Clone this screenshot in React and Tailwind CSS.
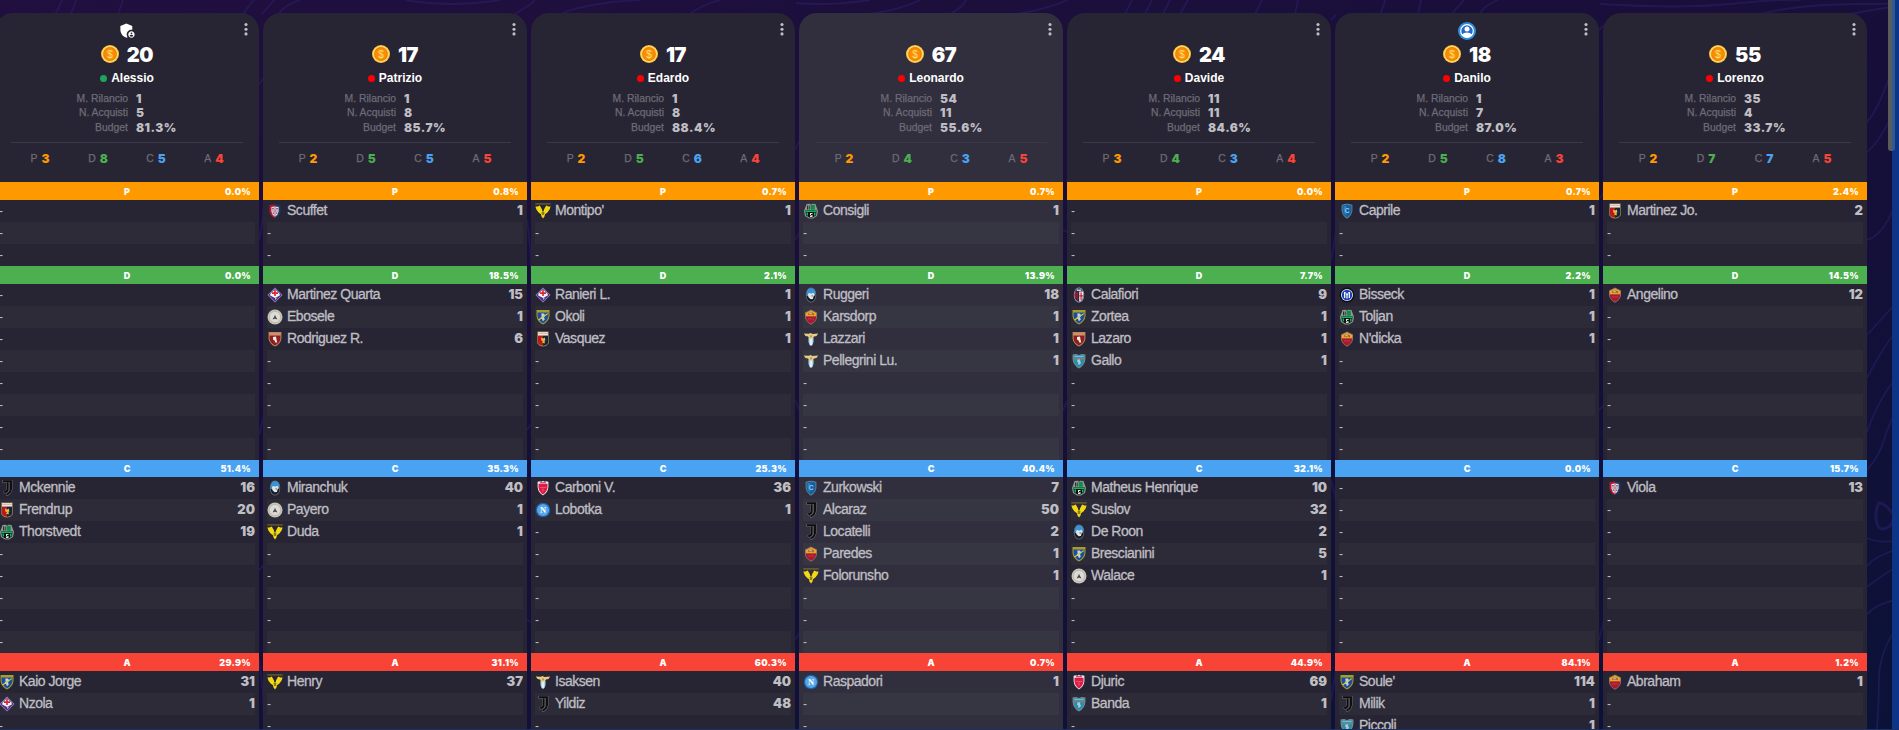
import React from "react";
import { MdAdminPanelSettings } from "react-icons/md";

const CRESTS = {
  cagliari: (
    <g>
      <path d="M2.400 2.300Q8 .6 13.600 2.300V8Q13 12.800 8 15.300Q3 12.800 2.400 8Z" fill="#1d3766" />
      <path d="M2.400 2.300Q5.200 1.400 8 1.400V15.300Q3 12.800 2.400 8Z" fill="#b3152e" />
      <path d="M4.400 4Q8 3 11.600 4V8.500Q11 12 8 13.800Q5 12 4.400 8.500Z" fill="#e6e2e8" />
      <path d="M7.400 4H8.600V13H7.400ZM4.500 7.400H11.500V8.500H4.500Z" fill="#cf6f80" />
      <path d="M5.200 5H6.700V6.400H5.200ZM9.300 5H10.800V6.400H9.300ZM5.700 9.500H7V10.800H5.700ZM9 9.500H10.300V10.800H9Z" fill="#50546c" />
    </g>
  ),
  fiorentina: (
    <g>
      <path d="M8 .5L15.500 8L8 15.500L.5 8Z" fill="#9a86c0" />
      <path d="M8 1.500L14.500 8L8 14.500L1.500 8Z" fill="#4d2d86" />
      <path d="M8 2.200L12.600 6.800L12.800 8.500L8 11L3.200 8.500L3.400 6.800Z" fill="#f4f1f6" />
      <path d="M8 11.500L10.500 10.300L8 13Z" fill="#e8e2f0" />
      <path d="M7.200 3H8.800V9H7.200ZM5 5.300H11V6.900H5Z" fill="#d8262c" />
    </g>
  ),
  udinese: (
    <g>
      <circle cx="8" cy="8" r="7.500" fill="#c9c4b8" />
      <circle cx="8" cy="8" r="5.600" fill="#dddbd7" stroke="#b0aca2" strokeWidth=".6" />
      <path d="M8 5.800L8.800 7.800L10.400 10.200H9.200L8 9.400L6.800 10.200H5.600L7.200 7.800Z" fill="#45433f" />
    </g>
  ),
  torino: (
    <g>
      <path d="M1.600 1H14.400V8Q13.500 13 8 15.600Q2.500 13 1.600 8Z" fill="#b98a62" />
      <path d="M2.600 4.500H13.400V8Q12.600 12.400 8 14.500Q3.400 12.400 2.600 8Z" fill="#8e1f1d" />
      <path d="M2.600 2H13.400V4.200H2.600Z" fill="#d98a6c" />
      <path d="M6 6L9 5.400L9.600 9L10.300 11.500H8.300L7.600 9.500L6 8.600Z" fill="#f4eeec" />
    </g>
  ),
  verona: (
    <g>
      <path d="M.3 .6H15.700V1.300H.3Z" fill="#a8952a" />
      <path d="M.4 3.600H2.600L4.800 2.600L7 6.400L7.400 8.500H8.600L9 6.400L11.200 2.600L13.400 3.600H15.600L14.600 6.400L12.400 9.400L10 11.200L9.500 13.600L8 15.500L6.500 13.600L6 11.200L3.600 9.400L1.400 6.400Z" fill="#f3d913" />
      <path d="M6.500 8.900H9.500L9 12H7Z" fill="#8c7f18" />
    </g>
  ),
  frosinone: (
    <g>
      <path d="M1.500 1H14.500V7Q13.800 12.600 8 15.500Q2.200 12.600 1.500 7Z" fill="#a89c2d" />
      <path d="M2.500 3.500H13.500V7Q12.800 11.800 8 14.300Q3.200 11.800 2.500 7Z" fill="#1a4f9e" />
      <path d="M6.300 4.400L9 4.500L10.200 6.500L9 8.500L9.800 10.500L8 12.300L7 10L5.200 9.500L6.600 7.500Z" fill="#c3d2e6" />
      <path d="M3.200 10.500L12.800 4V5.200L3.900 11.500Z" fill="#d8c932" />
    </g>
  ),
  genoa: (
    <g>
      <path d="M2.300 .6H13.700V12.500Q12 15.200 8 15.500Q4 15.200 2.300 12.500Z" fill="#a08a4c" />
      <path d="M3 4.600H8V14.700Q4.400 14.400 3 12.200Z" fill="#bd1622" />
      <path d="M8 4.600H13V12.200Q11.600 14.400 8 14.700Z" fill="#122445" />
      <path d="M3 1.200H13V4.400H3Z" fill="#f2efee" />
      <path d="M3 2.300H13V3.100H3Z" fill="#e09c98" />
      <path d="M6 6.500L8 7.500L10 6.500V8.300L10.600 9L9.500 10L10 12.300L7 12L8 10.300L6.300 9.500Z" fill="#e5bd25" />
    </g>
  ),
  atalanta: (
    <g>
      <ellipse cx="8" cy="8" rx="5.200" ry="7.500" fill="#69727b" />
      <ellipse cx="8" cy="8" rx="4.500" ry="6.800" fill="#15191f" />
      <path d="M3.400 9Q3.200 1.200 8 1.100Q12.800 1.200 12.600 7L8 9Z" fill="#3d92d2" />
      <path d="M5 7Q6.500 5 8 6.800L10.500 5.800L12 8L10.500 9.500L10 12L7.500 12.300L5.300 10Z" fill="#dce5eb" />
      <path d="M8 8.500L10.500 7.800L9.300 10.500Z" fill="#8d979f" />
    </g>
  ),
  monza: (
    <g>
      <path d="M2.600 1.800L5 1.200L6.500 1.800L8 .7L9.500 1.800L11 1.200L13.400 1.800V7Q13 12.500 8 15.500Q3 12.500 2.600 7Z" fill="#eee9ee" />
      <path d="M3.500 3.800H12.500V7.400Q11.800 12 8 14.400Q4.200 12 3.500 7.400Z" fill="#dd1b45" />
      <path d="M4.800 6.900H11.200V7.500H4.800ZM7.700 8.500H8.300V11.500H7.700Z" fill="#f08da2" />
      <path d="M5 2.200H11V3.200H5Z" fill="#d62a50" />
    </g>
  ),
  napoli: (
    <g>
      <circle cx="8" cy="8" r="7.300" fill="#1d5fae" />
      <circle cx="8" cy="8" r="6" fill="#58a6e6" />
      <text x="8" y="11" textAnchor="middle" fontFamily="Liberation Serif, serif" fontWeight="700" fontSize="8.500" fill="#fff">N</text>
    </g>
  ),
  sassuolo: (
    <g>
      <path d="M3.500 1L7 .8L8 2L9 .8L12.500 1L13.500 4L15 8L14 13L10 15.500H6L2 13L1 8L2.500 4Z" fill="#8f9893" />
      <path d="M2.300 7.300H13.700L13 12.500L9.600 14.600H6.400L3 12.500Z" fill="#0b1411" />
      <path d="M8 1.800L11.800 2V6.700H8Z" fill="#0b8d49" />
      <path d="M4 2.500H5.300V6.500H4ZM6.300 2.500H7.200V6.500H6.300Z" fill="#28332e" />
      <path d="M2.500 7.500H13.500V9H2.500ZM3.500 9.500H5V12.500H3.500ZM11 9.500H12.500V12.500H11Z" fill="#15b465" />
      <path d="M7 10H9.500V11H8V12H9.500V14H7V13H8.500V12.500H7Z" fill="#e0e8e3" />
    </g>
  ),
  roma: (
    <g>
      <path d="M2 3.600L8 .5L14 3.600V8.500Q13 13 8 15.700Q3 13 2 8.500Z" fill="#8d7466" />
      <path d="M2.800 7.200H13.200V8.400Q12.300 12.500 8 14.800Q3.700 12.500 2.800 8.400Z" fill="#a91a31" />
      <path d="M2.800 4.100L8 1.400L13.200 4.100V7.200H2.800Z" fill="#f0a127" />
      <path d="M5 4.600L6.500 3.800H9.800L11 5V6.200H10V5.600H6.200L5.600 6.200Z" fill="#7a6544" />
      <path d="M6.300 4.200H8.800V5H6.300Z" fill="#ddd2bd" />
      <path d="M5 9.600H11V10.300H5Z" fill="#cf4250" />
    </g>
  ),
  lazio: (
    <g>
      <path d="M5.500 6.500H10.500V11Q10 14 8 15Q6 14 5.500 11Z" fill="#a9d7ee" />
      <path d="M7.200 7H8.800V14H7.200Z" fill="#edf5f9" />
      <path d="M.8 2.600L6 2.800L7.200 2L8.500 2.400L9.500 2.900L15.200 2.600L13.500 5L11 5.600L9.300 7.800H6.700L5 5.600L2.500 5Z" fill="#e6cc85" />
      <path d="M7 4.400H9L8.400 6.600H7.600Z" fill="#a58645" />
    </g>
  ),
  empoli: (
    <g>
      <path d="M2.600 2Q8 -.3 13.400 2V8Q12.600 13 8 15.700Q3.400 13 2.600 8Z" fill="#5d819c" />
      <path d="M3.500 2.700Q8 .8 12.500 2.700V8Q11.800 12.200 8 14.600Q4.200 12.200 3.500 8Z" fill="#155f9f" />
      <path d="M4.600 3.500Q6 2.800 7.300 2.700V12.500Q5 10.800 4.600 8Z" fill="#2a80c1" />
      <text x="8" y="10.300" textAnchor="middle" fontFamily="Liberation Sans, sans-serif" fontWeight="700" fontSize="6.500" fill="#9cc8e2">C</text>
    </g>
  ),
  juventus: (
    <g fill="none">
      <path d="M3.500 1.300H12V9Q11.500 13 7.200 14.900" stroke="#77767c" strokeWidth="2.800" />
      <path d="M4 1.300H12V9Q11.500 13 7.500 14.700" stroke="#0b0b0d" strokeWidth="1.900" />
      <path d="M8.700 3V9.500Q8.400 11.500 4.800 12.600" stroke="#77767c" strokeWidth="2.400" />
      <path d="M8.700 2.500V9.500Q8.400 11.500 5.200 12.400" stroke="#0b0b0d" strokeWidth="1.700" />
    </g>
  ),
  bologna: (
    <g>
      <ellipse cx="8" cy="8" rx="5.200" ry="7.500" fill="#aeb0b8" />
      <ellipse cx="8" cy="8" rx="4.500" ry="6.800" fill="#17284f" />
      <path d="M4 5H5.600V12.500Q4 11 3.600 8Z" fill="#b5162b" />
      <path d="M8.200 4.600H12Q12.800 8 11.500 12Q10 14.400 8.200 14.700Z" fill="#eceaec" />
      <path d="M9.500 5.500H10.700V13H9.500ZM8.300 8.300H12.300V9.500H8.300Z" fill="#c81d32" />
      <path d="M6.200 4.600H7.200V13.500H6.200Z" fill="#b5162b" />
      <path d="M5.800 2.500H10.200V4H5.800Z" fill="#cfd3dc" />
    </g>
  ),
  lecce: (
    <g>
      <path d="M1.600 1.500L5 1L8 2L11 1L14.400 1.500V6Q14 12 8 15.600Q2 12 1.600 6Z" fill="#7d8d91" />
      <path d="M2.500 2.300H13.500V6Q13 11.400 8 14.500Q3 11.400 2.500 6Z" fill="#248fb3" />
      <path d="M3.300 2.800H12.700V4.200H3.300Z" fill="#6fbcd2" />
      <path d="M2.700 5.300H13.300V6.300H2.700Z" fill="#c2734a" />
      <path d="M6.500 6.500L9 6.300L9.300 8.500L10 9.800L8.800 11.400H7L7.300 9.500L6 8.500Z" fill="#a8cdd3" />
    </g>
  ),
  inter: (
    <g>
      <circle cx="8" cy="8" r="7.400" fill="#0c0f17" />
      <circle cx="8" cy="8" r="6" fill="#e9edf7" />
      <circle cx="8" cy="8" r="5.200" fill="#1b3fb8" />
      <path d="M5 5H6.300V11H5ZM7.350 6.500H8.650V11.500H7.350ZM9.700 5H11V11H9.700Z" fill="#f4f6fb" />
      <path d="M6 5.200L8 8L10 5.200" fill="none" stroke="#f4f6fb" strokeWidth=".9" />
    </g>
  ),
};

const ROLES = [
  { id: "P", rows: 3, bar: "h-[18px] bg-[#ff9900]", text: "text-[#ff9900]" },
  { id: "D", rows: 8, bar: "h-[18px] bg-[#4caf50]", text: "text-[#4caf50]" },
  { id: "C", rows: 8, bar: "h-[17px] bg-[#4aa3f2]", text: "text-[#4aa3f2]" },
  { id: "A", rows: 3, bar: "h-[18px] bg-[#f74436]", text: "text-[#f74436]" },
];

const TEAMS = [
  {
    name: "Alessio", credits: 20, online: true, badge: "admin", bid: 1, buys: 5, budget: "81.3%",
    left: [3, 8, 5, 4], pct: ["0.0%", "0.0%", "51.4%", "29.9%"],
    squad: [[], [],
      [["juventus", "Mckennie", 16], ["genoa", "Frendrup", 20], ["sassuolo", "Thorstvedt", 19]],
      [["frosinone", "Kaio Jorge", 31], ["fiorentina", "Nzola", 1]]],
  },
  {
    name: "Patrizio", credits: 17, bid: 1, buys: 8, budget: "85.7%",
    left: [2, 5, 5, 5], pct: ["0.8%", "18.5%", "35.3%", "31.1%"],
    squad: [[["cagliari", "Scuffet", 1]],
      [["fiorentina", "Martinez Quarta", 15], ["udinese", "Ebosele", 1], ["torino", "Rodriguez R.", 6]],
      [["atalanta", "Miranchuk", 40], ["udinese", "Payero", 1], ["verona", "Duda", 1]],
      [["verona", "Henry", 37]]],
  },
  {
    name: "Edardo", credits: 17, bid: 1, buys: 8, budget: "88.4%",
    left: [2, 5, 6, 4], pct: ["0.7%", "2.1%", "25.3%", "60.3%"],
    squad: [[["verona", "Montipo'", 1]],
      [["fiorentina", "Ranieri L.", 1], ["frosinone", "Okoli", 1], ["genoa", "Vasquez", 1]],
      [["monza", "Carboni V.", 36], ["napoli", "Lobotka", 1]],
      [["lazio", "Isaksen", 40], ["juventus", "Yildiz", 48]]],
  },
  {
    name: "Leonardo", credits: 67, active: true, bid: 54, buys: 11, budget: "55.6%",
    left: [2, 4, 3, 5], pct: ["0.7%", "13.9%", "40.4%", "0.7%"],
    squad: [[["sassuolo", "Consigli", 1]],
      [["atalanta", "Ruggeri", 18], ["roma", "Karsdorp", 1], ["lazio", "Lazzari", 1], ["lazio", "Pellegrini Lu.", 1]],
      [["empoli", "Zurkowski", 7], ["juventus", "Alcaraz", 50], ["juventus", "Locatelli", 2], ["roma", "Paredes", 1], ["verona", "Folorunsho", 1]],
      [["napoli", "Raspadori", 1]]],
  },
  {
    name: "Davide", credits: 24, bid: 11, buys: 11, budget: "84.6%",
    left: [3, 4, 3, 4], pct: ["0.0%", "7.7%", "32.1%", "44.9%"],
    squad: [[],
      [["bologna", "Calafiori", 9], ["frosinone", "Zortea", 1], ["torino", "Lazaro", 1], ["lecce", "Gallo", 1]],
      [["sassuolo", "Matheus Henrique", 10], ["verona", "Suslov", 32], ["atalanta", "De Roon", 2], ["frosinone", "Brescianini", 5], ["udinese", "Walace", 1]],
      [["monza", "Djuric", 69], ["lecce", "Banda", 1]]],
  },
  {
    name: "Danilo", credits: 18, badge: "user", bid: 1, buys: 7, budget: "87.0%",
    left: [2, 5, 8, 3], pct: ["0.7%", "2.2%", "0.0%", "84.1%"],
    squad: [[["empoli", "Caprile", 1]],
      [["inter", "Bisseck", 1], ["sassuolo", "Toljan", 1], ["roma", "N'dicka", 1]],
      [],
      [["frosinone", "Soule'", 114], ["juventus", "Milik", 1], ["lecce", "Piccoli", 1]]],
  },
  {
    name: "Lorenzo", credits: 55, bid: 35, buys: 4, budget: "33.7%",
    left: [2, 7, 7, 5], pct: ["2.4%", "14.5%", "15.7%", "1.2%"],
    squad: [[["genoa", "Martinez Jo.", 2]],
      [["roma", "Angelino", 12]],
      [["cagliari", "Viola", 13]],
      [["roma", "Abraham", 1]]],
  },
];

function Crest({ club }) {
  return <svg viewBox="0 0 16 16" className="size-4 shrink-0">{CRESTS[club]}</svg>;
}

function Heavy({ className, children }) {
  return <span className={`font-[Inter] font-black leading-none ${className}`}>{children}</span>;
}

function Coin() {
  return (
    <svg viewBox="0 0 18 18" className="size-[18px]">
      <circle cx="9" cy="9" r="9" fill="#fbc43a" />
      <circle cx="9" cy="9" r="8" fill="#fddb74" />
      <circle cx="9" cy="9" r="6.900" fill="#e97f06" />
      <circle cx="9" cy="9" r="5.900" fill="#f98f00" />
      <text x="9" y="12.500" textAnchor="middle" fontFamily="Liberation Sans, sans-serif" fontSize="10" fill="#ffe07a">$</text>
    </svg>
  );
}

function Badge({ type }) {
  if (type === "admin") return <MdAdminPanelSettings className="size-[19px] text-white" />;
  if (type === "user")
    return (
      <svg viewBox="0 0 18 18" className="size-[18px]">
        <circle cx="9" cy="9" r="9" fill="#2c8fd9" />
        <circle cx="9" cy="9" r="6.300" fill="#2867c8" stroke="#fff" strokeWidth="1.200" />
        <circle cx="9" cy="6.900" r="2.500" fill="#fff" />
        <path d="M4 12.600Q6 10.600 9 10.600T14 12.600Q12 15.300 9 15.300T4 12.600Z" fill="#fff" />
      </svg>
    );
  return null;
}

function MenuDots() {
  return (
    <svg viewBox="0 0 4 14" className="absolute right-[11px] top-[9px] h-[14px] w-1" fill="#bfbec3">
      <circle cx="2" cy="2.500" r="1.550" />
      <circle cx="2" cy="7.200" r="1.550" />
      <circle cx="2" cy="11.900" r="1.550" />
    </svg>
  );
}

function Stat({ label, value }) {
  return (
    <div className="grid h-[14.300px] grid-cols-[133px_1fr] items-center gap-2 leading-none">
      <span className="text-right text-[10.400px] text-[#6d6b76] [-webkit-text-stroke:0.25px_currentColor]">{label}</span>
      <Heavy className="text-[12px] tracking-[0.04em] text-[#bfbec3]">{value}</Heavy>
    </div>
  );
}

function Row({ player, striped, active }) {
  const tint = !striped ? "" : active ? "bg-[#363542]" : "bg-[#2d2b38]";
  return (
    <div className={`mx-1 flex h-[22px] items-center text-[#bfbec3] ${tint}`}>
      {player ? (
        <>
          <Crest club={player[0]} />
          <span className="mb-0.5 ml-1 flex-1 text-[14px] leading-none tracking-[-0.480px] [-webkit-text-stroke:0.3px_currentColor]">
            {player[1]}
          </span>
          <Heavy className="mb-px text-[13px]">{player[2]}</Heavy>
        </>
      ) : (
        <span className="text-[12px] leading-none">-</span>
      )}
    </div>
  );
}

function TeamCard({ team }) {
  return (
    <section className={`flex w-[264px] shrink-0 flex-col rounded-t-[18px] ${team.active ? "bg-[#312f3e]" : "bg-[#272533]"}`}>
      <header className="relative flex h-[169px] shrink-0 flex-col items-center">
        <MenuDots />
        <div className="mt-2 flex h-[19px] items-center">
          <Badge type={team.badge} />
        </div>
        <div className="mt-[3px] flex h-[22px] items-center gap-2">
          <Coin />
          <Heavy className="pt-px text-[20px] tracking-[-0.020em] text-white">{team.credits}</Heavy>
        </div>
        <div className="mt-[5px] flex h-4 items-center gap-1 text-[12px] font-bold leading-none text-white">
          <i className={`size-[7px] rounded-full ${team.online ? "bg-[#1aa65c]" : "bg-[#ff0000]"}`} />
          <span>{team.name}</span>
        </div>
        <div className="mt-1.5 w-full">
          <Stat label="M. Rilancio" value={team.bid} />
          <Stat label="N. Acquisti" value={team.buys} />
          <Stat label="Budget" value={team.budget} />
        </div>
        <div className="mt-[7px] grid w-[232px] grid-cols-4 border-t border-[#3b3947] pt-2">
          {ROLES.map((r, i) => (
            <div key={r.id} className="flex h-4 items-center justify-center gap-1 leading-none">
              <span className="text-[10.400px] text-[#6d6b76] [-webkit-text-stroke:0.25px_currentColor]">{r.id}</span>
              <Heavy className={`text-[12px] ${r.text}`}>{team.left[i]}</Heavy>
            </div>
          ))}
        </div>
      </header>
      {ROLES.map((r, i) => (
        <div key={r.id} className="shrink-0">
          <div className={`grid grid-cols-3 items-center px-2 text-white ${r.bar}`}>
            <Heavy className="col-start-2 text-center text-[9px]">{r.id}</Heavy>
            <Heavy className="text-right text-[9px] tracking-[0.03em]">{team.pct[i]}</Heavy>
          </div>
          {Array.from({ length: r.rows }, (_, n) => (
            <Row key={n} player={team.squad[i][n]} striped={n % 2 === 1} active={team.active} />
          ))}
        </div>
      ))}
    </section>
  );
}

function Contours() {
  return (
    <svg viewBox="0 0 1899 730" className="absolute inset-0 h-full w-full" fill="none" stroke="#2a1e66" strokeOpacity=".6" strokeWidth="1.800">
      <path d="M55 14Q60 6 62 0M70 14Q75 6 76 0M118 14L123 0M243 14Q250 4 254 0M262 14Q270 5 274 0M278 14Q285 5 300 0M405 0Q450 8 500 0M515 14Q530 5 535 0" />
      <path d="M560 14Q590 2 640 0M690 14Q700 6 720 0M796 3Q830 6 870 0M870 14Q900 10 920 0M950 14Q962 8 966 0M1018 14Q1050 8 1068 0" />
      <path d="M1125 14L1132 0M1145 14L1152 0M1163 14L1170 0M1180 14L1188 0M1255 14L1262 0M1295 14L1298 0M1380 14Q1384 6 1385 0M1418 14L1421 0M1452 14Q1458 6 1464 0M1480 14Q1483 6 1498 0" />
      <path d="M1600 4Q1680 9 1730 4T1800 0M1760 14Q1800 4 1860 4T1892 0M1850 14Q1870 10 1892 7" />
      <path d="M259 85L264 77M259 240Q264 220 264 190M259 435L264 415M259 570L264 565M259 660Q264 690 264 730" />
      <path d="M527 220Q531 250 531 270M527 430L531 424M527 620L531 622M795 150L800 140M795 240L800 232M795 400L800 412M795 640L800 632M1063 230L1068 232M1063 410L1068 400" />
      <path d="M1331 20L1336 15M1331 260Q1334 245 1336 230M1331 480L1336 500M1331 700L1336 670M1599 30L1604 25M1599 200L1604 192M1599 410L1604 405M1599 640L1604 620" />
      <path d="M1867 122Q1880 108 1895 60M1867 152Q1882 140 1899 100M1867 240Q1885 235 1899 195M1867 335Q1885 315 1899 300M1867 378Q1884 345 1899 328M1867 432Q1880 395 1899 375M1867 470Q1880 455 1884 440T1899 405" />
      <path d="M1879 503Q1874 512 1877 524Q1880 533 1890 526L1895 517Q1886 503 1879 503Z" strokeWidth="3" />
      <path d="M1867 538Q1880 544 1899 540M1867 566Q1876 555 1899 549M1867 587Q1880 577 1899 565M1867 614Q1878 603 1899 599M1877 730Q1879 700 1879 674Q1882 645 1899 626" />
    </svg>
  );
}

export default function App() {
  return (
    <main className="relative flex h-[730px] w-full overflow-hidden bg-[linear-gradient(165deg,#210f3f_0%,#170f39_45%,#0b1238_100%)] font-['Liberation_Sans',Arial,sans-serif]">
      <Contours />
      <div className="relative -ml-[5px] flex w-[1897px] shrink-0 gap-1 pt-[13px]">
        {TEAMS.map((t) => (
          <TeamCard key={t.name} team={t} />
        ))}
      </div>
      <aside className="relative flex-1 bg-[#0c3487]" />
      <div className="absolute right-1 top-0 flex h-[151px] w-[7px] overflow-hidden rounded-b-[3px]">
        <div className="w-1 bg-[#5b5b5b]" />
        <div className="w-[3px] bg-[#315994]" />
      </div>
      <div className="absolute inset-x-0 bottom-0 h-px bg-[#1b2f62]" />
    </main>
  );
}
